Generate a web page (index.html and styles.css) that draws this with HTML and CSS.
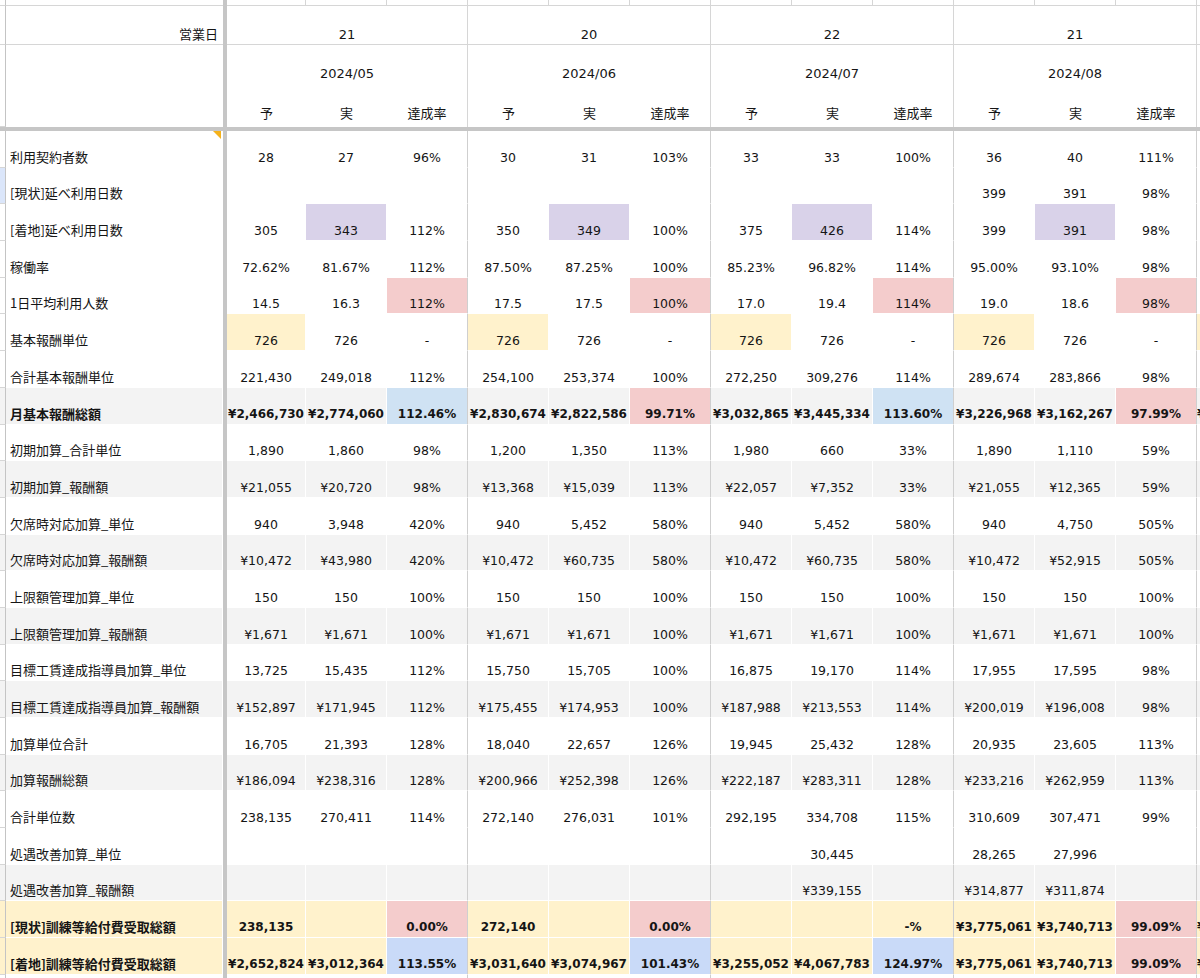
FILE: index.html
```html
<!DOCTYPE html>
<html lang="ja">
<head>
<meta charset="utf-8">
<title>予実管理表</title>
<link rel="stylesheet" href="styles.css">
</head>
<body>
<div class="sheet">
  <div class="hdr">
    <div class="stub r0"></div><div class="hl r0"></div><div class="fzv"></div>
    <div class="h0"></div><div class="h0"></div><div class="h0"></div>
    <div class="h0"></div><div class="h0"></div><div class="h0"></div>
    <div class="h0"></div><div class="h0"></div><div class="h0"></div>
    <div class="h0"></div><div class="h0"></div><div class="h0"></div>
    <div class="h0"></div>

    <div class="stub r1"></div><div class="hl r1 right">営業日</div>
    <div class="h1 span3">21</div><div class="h1 span3">20</div><div class="h1 span3">22</div><div class="h1 span3">21</div><div class="h1"></div>

    <div class="stub r2"></div><div class="hl r23"></div>
    <div class="h2 span3">2024/05</div><div class="h2 span3">2024/06</div><div class="h2 span3">2024/07</div><div class="h2 span3">2024/08</div><div class="h2"></div>

    <div class="stub r3"></div>
    <div class="h3">予</div><div class="h3">実</div><div class="h3 m">達成率</div>
    <div class="h3">予</div><div class="h3">実</div><div class="h3 m">達成率</div>
    <div class="h3">予</div><div class="h3">実</div><div class="h3 m">達成率</div>
    <div class="h3">予</div><div class="h3">実</div><div class="h3 m">達成率</div>
    <div class="h3"></div>
  </div>
  <div class="fzh"></div>

  <div class="row">
    <div class="stub"></div><div class="lab note">利用契約者数</div><div class="fz"></div>
    <div class="c">28</div><div class="c">27</div><div class="c m">96%</div>
    <div class="c">30</div><div class="c">31</div><div class="c m">103%</div>
    <div class="c">33</div><div class="c">33</div><div class="c m">100%</div>
    <div class="c">36</div><div class="c">40</div><div class="c m">111%</div>
    <div class="c"></div>
  </div>

  <div class="row">
    <div class="stub sel"></div><div class="lab">[現状]延べ利用日数</div><div class="fz"></div>
    <div class="c"></div><div class="c"></div><div class="c m"></div>
    <div class="c"></div><div class="c"></div><div class="c m"></div>
    <div class="c"></div><div class="c"></div><div class="c m"></div>
    <div class="c">399</div><div class="c">391</div><div class="c m">98%</div>
    <div class="c"></div>
  </div>

  <div class="row">
    <div class="stub"></div><div class="lab">[着地]延べ利用日数</div><div class="fz"></div>
    <div class="c">305</div><div class="c pu">343</div><div class="c m">112%</div>
    <div class="c">350</div><div class="c pu">349</div><div class="c m">100%</div>
    <div class="c">375</div><div class="c pu">426</div><div class="c m">114%</div>
    <div class="c">399</div><div class="c pu">391</div><div class="c m">98%</div>
    <div class="c"></div>
  </div>

  <div class="row">
    <div class="stub"></div><div class="lab">稼働率</div><div class="fz"></div>
    <div class="c">72.62%</div><div class="c">81.67%</div><div class="c m">112%</div>
    <div class="c">87.50%</div><div class="c">87.25%</div><div class="c m">100%</div>
    <div class="c">85.23%</div><div class="c">96.82%</div><div class="c m">114%</div>
    <div class="c">95.00%</div><div class="c">93.10%</div><div class="c m">98%</div>
    <div class="c"></div>
  </div>

  <div class="row">
    <div class="stub"></div><div class="lab">1日平均利用人数</div><div class="fz"></div>
    <div class="c">14.5</div><div class="c">16.3</div><div class="c m pk">112%</div>
    <div class="c">17.5</div><div class="c">17.5</div><div class="c m pk">100%</div>
    <div class="c">17.0</div><div class="c">19.4</div><div class="c m pk">114%</div>
    <div class="c">19.0</div><div class="c">18.6</div><div class="c m pk">98%</div>
    <div class="c"></div>
  </div>

  <div class="row">
    <div class="stub"></div><div class="lab">基本報酬単位</div><div class="fz"></div>
    <div class="c ye">726</div><div class="c">726</div><div class="c m">-</div>
    <div class="c ye">726</div><div class="c">726</div><div class="c m">-</div>
    <div class="c ye">726</div><div class="c">726</div><div class="c m">-</div>
    <div class="c ye">726</div><div class="c">726</div><div class="c m">-</div>
    <div class="c ye"></div>
  </div>

  <div class="row">
    <div class="stub"></div><div class="lab">合計基本報酬単位</div><div class="fz"></div>
    <div class="c">221,430</div><div class="c">249,018</div><div class="c m">112%</div>
    <div class="c">254,100</div><div class="c">253,374</div><div class="c m">100%</div>
    <div class="c">272,250</div><div class="c">309,276</div><div class="c m">114%</div>
    <div class="c">289,674</div><div class="c">283,866</div><div class="c m">98%</div>
    <div class="c"></div>
  </div>

  <div class="row gray bold">
    <div class="stub"></div><div class="lab">月基本報酬総額</div><div class="fz"></div>
    <div class="c">¥2,466,730</div><div class="c">¥2,774,060</div><div class="c m bl">112.46%</div>
    <div class="c">¥2,830,674</div><div class="c">¥2,822,586</div><div class="c m pk">99.71%</div>
    <div class="c">¥3,032,865</div><div class="c">¥3,445,334</div><div class="c m bl">113.60%</div>
    <div class="c">¥3,226,968</div><div class="c">¥3,162,267</div><div class="c m pk">97.99%</div>
    <div class="c sl">¥</div>
  </div>

  <div class="row">
    <div class="stub"></div><div class="lab">初期加算_合計単位</div><div class="fz"></div>
    <div class="c">1,890</div><div class="c">1,860</div><div class="c m">98%</div>
    <div class="c">1,200</div><div class="c">1,350</div><div class="c m">113%</div>
    <div class="c">1,980</div><div class="c">660</div><div class="c m">33%</div>
    <div class="c">1,890</div><div class="c">1,110</div><div class="c m">59%</div>
    <div class="c"></div>
  </div>

  <div class="row gray">
    <div class="stub"></div><div class="lab">初期加算_報酬額</div><div class="fz"></div>
    <div class="c">¥21,055</div><div class="c">¥20,720</div><div class="c m">98%</div>
    <div class="c">¥13,368</div><div class="c">¥15,039</div><div class="c m">113%</div>
    <div class="c">¥22,057</div><div class="c">¥7,352</div><div class="c m">33%</div>
    <div class="c">¥21,055</div><div class="c">¥12,365</div><div class="c m">59%</div>
    <div class="c"></div>
  </div>

  <div class="row">
    <div class="stub"></div><div class="lab">欠席時対応加算_単位</div><div class="fz"></div>
    <div class="c">940</div><div class="c">3,948</div><div class="c m">420%</div>
    <div class="c">940</div><div class="c">5,452</div><div class="c m">580%</div>
    <div class="c">940</div><div class="c">5,452</div><div class="c m">580%</div>
    <div class="c">940</div><div class="c">4,750</div><div class="c m">505%</div>
    <div class="c"></div>
  </div>

  <div class="row gray">
    <div class="stub"></div><div class="lab">欠席時対応加算_報酬額</div><div class="fz"></div>
    <div class="c">¥10,472</div><div class="c">¥43,980</div><div class="c m">420%</div>
    <div class="c">¥10,472</div><div class="c">¥60,735</div><div class="c m">580%</div>
    <div class="c">¥10,472</div><div class="c">¥60,735</div><div class="c m">580%</div>
    <div class="c">¥10,472</div><div class="c">¥52,915</div><div class="c m">505%</div>
    <div class="c"></div>
  </div>

  <div class="row">
    <div class="stub"></div><div class="lab">上限額管理加算_単位</div><div class="fz"></div>
    <div class="c">150</div><div class="c">150</div><div class="c m">100%</div>
    <div class="c">150</div><div class="c">150</div><div class="c m">100%</div>
    <div class="c">150</div><div class="c">150</div><div class="c m">100%</div>
    <div class="c">150</div><div class="c">150</div><div class="c m">100%</div>
    <div class="c"></div>
  </div>

  <div class="row gray">
    <div class="stub"></div><div class="lab">上限額管理加算_報酬額</div><div class="fz"></div>
    <div class="c">¥1,671</div><div class="c">¥1,671</div><div class="c m">100%</div>
    <div class="c">¥1,671</div><div class="c">¥1,671</div><div class="c m">100%</div>
    <div class="c">¥1,671</div><div class="c">¥1,671</div><div class="c m">100%</div>
    <div class="c">¥1,671</div><div class="c">¥1,671</div><div class="c m">100%</div>
    <div class="c"></div>
  </div>

  <div class="row">
    <div class="stub"></div><div class="lab">目標工賃達成指導員加算_単位</div><div class="fz"></div>
    <div class="c">13,725</div><div class="c">15,435</div><div class="c m">112%</div>
    <div class="c">15,750</div><div class="c">15,705</div><div class="c m">100%</div>
    <div class="c">16,875</div><div class="c">19,170</div><div class="c m">114%</div>
    <div class="c">17,955</div><div class="c">17,595</div><div class="c m">98%</div>
    <div class="c"></div>
  </div>

  <div class="row gray">
    <div class="stub"></div><div class="lab">目標工賃達成指導員加算_報酬額</div><div class="fz"></div>
    <div class="c">¥152,897</div><div class="c">¥171,945</div><div class="c m">112%</div>
    <div class="c">¥175,455</div><div class="c">¥174,953</div><div class="c m">100%</div>
    <div class="c">¥187,988</div><div class="c">¥213,553</div><div class="c m">114%</div>
    <div class="c">¥200,019</div><div class="c">¥196,008</div><div class="c m">98%</div>
    <div class="c"></div>
  </div>

  <div class="row">
    <div class="stub"></div><div class="lab">加算単位合計</div><div class="fz"></div>
    <div class="c">16,705</div><div class="c">21,393</div><div class="c m">128%</div>
    <div class="c">18,040</div><div class="c">22,657</div><div class="c m">126%</div>
    <div class="c">19,945</div><div class="c">25,432</div><div class="c m">128%</div>
    <div class="c">20,935</div><div class="c">23,605</div><div class="c m">113%</div>
    <div class="c"></div>
  </div>

  <div class="row gray">
    <div class="stub"></div><div class="lab">加算報酬総額</div><div class="fz"></div>
    <div class="c">¥186,094</div><div class="c">¥238,316</div><div class="c m">128%</div>
    <div class="c">¥200,966</div><div class="c">¥252,398</div><div class="c m">126%</div>
    <div class="c">¥222,187</div><div class="c">¥283,311</div><div class="c m">128%</div>
    <div class="c">¥233,216</div><div class="c">¥262,959</div><div class="c m">113%</div>
    <div class="c"></div>
  </div>

  <div class="row">
    <div class="stub"></div><div class="lab">合計単位数</div><div class="fz"></div>
    <div class="c">238,135</div><div class="c">270,411</div><div class="c m">114%</div>
    <div class="c">272,140</div><div class="c">276,031</div><div class="c m">101%</div>
    <div class="c">292,195</div><div class="c">334,708</div><div class="c m">115%</div>
    <div class="c">310,609</div><div class="c">307,471</div><div class="c m">99%</div>
    <div class="c"></div>
  </div>

  <div class="row">
    <div class="stub"></div><div class="lab">処遇改善加算_単位</div><div class="fz"></div>
    <div class="c"></div><div class="c"></div><div class="c m"></div>
    <div class="c"></div><div class="c"></div><div class="c m"></div>
    <div class="c"></div><div class="c">30,445</div><div class="c m"></div>
    <div class="c">28,265</div><div class="c">27,996</div><div class="c m"></div>
    <div class="c"></div>
  </div>

  <div class="row gray">
    <div class="stub"></div><div class="lab">処遇改善加算_報酬額</div><div class="fz"></div>
    <div class="c"></div><div class="c"></div><div class="c m"></div>
    <div class="c"></div><div class="c"></div><div class="c m"></div>
    <div class="c"></div><div class="c">¥339,155</div><div class="c m"></div>
    <div class="c">¥314,877</div><div class="c">¥311,874</div><div class="c m"></div>
    <div class="c"></div>
  </div>

  <div class="row yel bold">
    <div class="stub"></div><div class="lab">[現状]訓練等給付費受取総額</div><div class="fz"></div>
    <div class="c">238,135</div><div class="c"></div><div class="c m pk">0.00%</div>
    <div class="c">272,140</div><div class="c"></div><div class="c m pk">0.00%</div>
    <div class="c"></div><div class="c"></div><div class="c m">-%</div>
    <div class="c">¥3,775,061</div><div class="c">¥3,740,713</div><div class="c m pk">99.09%</div>
    <div class="c sl">¥</div>
  </div>

  <div class="row yel bold">
    <div class="stub"></div><div class="lab">[着地]訓練等給付費受取総額</div><div class="fz"></div>
    <div class="c">¥2,652,824</div><div class="c">¥3,012,364</div><div class="c m bl2">113.55%</div>
    <div class="c">¥3,031,640</div><div class="c">¥3,074,967</div><div class="c m bl2">101.43%</div>
    <div class="c">¥3,255,052</div><div class="c">¥4,067,783</div><div class="c m bl2">124.97%</div>
    <div class="c">¥3,775,061</div><div class="c">¥3,740,713</div><div class="c m pk">99.09%</div>
    <div class="c sl">¥</div>
  </div>

  <div class="row">
    <div class="stub"></div><div class="lab"></div><div class="fz"></div>
    <div class="c"></div><div class="c"></div><div class="c m"></div>
    <div class="c"></div><div class="c"></div><div class="c m"></div>
    <div class="c"></div><div class="c"></div><div class="c m"></div>
    <div class="c"></div><div class="c"></div><div class="c m"></div>
    <div class="c"></div>
  </div>
</div>
</body>
</html>
```

FILE: styles.css
```css
html, body {
  margin: 0;
  padding: 0;
  background: #ffffff;
}

body {
  width: 1200px;
  height: 978px;
  overflow: hidden;
  font-family: "Noto Sans CJK JP", "Noto Sans", sans-serif;
  font-size: 13px;
  color: #151515;
}

.sheet {
  width: 1278px;
  display: flex;
  flex-direction: column;
}

.hdr,
.row {
  display: grid;
  grid-template-columns: 6px 217px 4px 79px repeat(11, 81px) 81px;
}

.hdr {
  grid-template-rows: 6px 39px 43px 39px;
}

.row {
  height: 36.7px;
}

.hdr > div,
.row > div {
  box-sizing: border-box;
  display: flex;
  align-items: flex-end;
  justify-content: center;
  line-height: 17px;
  white-space: nowrap;
  overflow: hidden;
}

/* left row-number stub */
.stub {
  border-right: 1px solid #c4c4c4;
  border-bottom: 1px solid #d6d6d6;
}
.stub.sel {
  background: #dbe6fa;
}
.hdr .r0 { grid-row: 1; }
.hdr .r1 { grid-row: 2; }
.hdr .r2 { grid-row: 3; border-bottom: none; }
.hdr .r3 { grid-row: 4; grid-column: 1; }
.hdr .r23 { grid-row: 3 / span 2; grid-column: 2; }

/* header label column */
.hl {
  border-bottom: 1px solid #d6d6d6;
}
.hl.r23 {
  border-bottom: none;
}
.hl.right {
  justify-content: flex-end;
  padding-right: 5px;
  padding-bottom: 2px;
}

/* frozen separators */
.fzv {
  grid-column: 3;
  grid-row: 1 / span 4;
  background: #c6c6c6;
}
.fz {
  background: #c6c6c6;
}
.fzh {
  height: 4px;
  width: 1278px;
  background: #c6c6c6;
}

/* header rows */
.h0 {
  border-right: 1px solid #d6d6d6;
  border-bottom: 1px solid #d6d6d6;
}
.h1 {
  font-family: "DejaVu Sans", "Noto Sans CJK JP", sans-serif;
  font-size: 13px;
  border-right: 1px solid #d6d6d6;
  border-bottom: 1px solid #d6d6d6;
  padding-bottom: 1px;
}
.h2 {
  font-family: "DejaVu Sans", "Noto Sans CJK JP", sans-serif;
  font-size: 13px;
  border-right: 1px solid #d6d6d6;
  padding-bottom: 6px;
}
.h3 {
  padding-bottom: 6px;
}
.h3.m {
  border-right: 1px solid #d6d6d6;
}
.span3 {
  grid-column: span 3;
}

/* data rows */
.lab {
  justify-content: flex-start !important;
  padding-left: 4px;
  padding-bottom: 2px;
  border-right: 1px solid #ffffff;
  border-bottom: 1px solid #ffffff;
}
.lab.note {
  position: relative;
  overflow: visible;
}
.lab.note::after {
  content: "";
  position: absolute;
  top: 0;
  right: 1px;
  width: 0;
  height: 0;
  border-top: 8px solid #f5b21b;
  border-left: 8px solid transparent;
}

.c {
  font-family: "DejaVu Sans", "Noto Sans CJK JP", sans-serif;
  font-size: 12.5px;
  padding-bottom: 1px;
  border-right: 1px solid #ffffff;
  border-bottom: 1px solid #ffffff;
}
.bold .c {
  font-size: 12px;
}
.c.m {
  border-right: 1px solid #cfcfcf;
}
.c.sl {
  justify-content: flex-start;
  padding-left: 0;
}

.gray {
  background: #f3f3f3;
}
.yel {
  background: #fff2cc;
}
.bold {
  font-weight: 700;
}

.pu { background: #d9d2e9; }
.pk { background: #f4cccc; }
.ye { background: #fff2cc; }
.bl { background: #cfe2f3; }
.bl2 { background: #c9daf8; }
```
